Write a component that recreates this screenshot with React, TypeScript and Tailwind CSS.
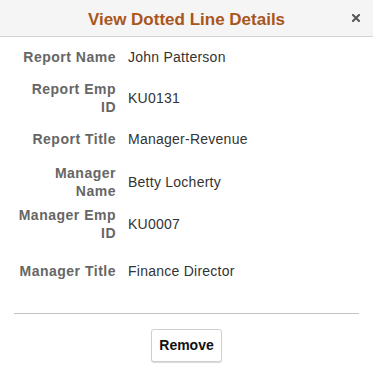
const rows = [
  { label: ['Report Name'], value: 'John Patterson', mt: 'mt-0' },
  { label: ['Report Emp', 'ID'], value: 'KU0131', mt: 'mt-[14px]' },
  { label: ['Report Title'], value: 'Manager-Revenue', mt: 'mt-[14px]' },
  { label: ['Manager', 'Name'], value: 'Betty Locherty', mt: 'mt-[16px]' },
  { label: ['Manager Emp', 'ID'], value: 'KU0007', mt: 'mt-[6px]' },
  { label: ['Manager Title'], value: 'Finance Director', mt: 'mt-[20px]' },
];

export default function App() {
  return (
    <div className="w-[373px] h-[387px] bg-white font-['Liberation_Sans',Arial,sans-serif] flex flex-col">
      {/* Header */}
      <div className="relative h-[37px] shrink-0 bg-[#f5f5f5] border-b border-[#d3d3d3] flex items-center justify-center">
        <h1 className="text-[17px] font-bold text-[#a9561c] leading-none pt-[2px]">View Dotted Line Details</h1>
        <button className="absolute right-[13px] top-[14px] w-[8px] h-[8px] flex items-center justify-center">
          <svg viewBox="0 0 8 8" className="w-[8px] h-[8px]" stroke="#555" strokeWidth="2" strokeLinecap="square">
            <path d="M1 1 L7 7 M7 1 L1 7" />
          </svg>
        </button>
      </div>

      {/* Details */}
      <div className="flex flex-col pt-[11px] pl-[14px] pr-4">
        {rows.map((r) => (
          <div key={r.value} className={`${r.mt} flex items-center gap-[12px] text-[14px] leading-[18px]`}>
            <div className="w-[102px] shrink-0 text-right font-bold text-[#666] whitespace-nowrap tracking-[0.5px]">
              {r.label.map((line) => (
                <div key={line}>{line}</div>
              ))}
            </div>
            <div className="text-[#333] tracking-[0.25px]">{r.value}</div>
          </div>
        ))}
      </div>

      {/* Footer */}
      <div className="mt-auto">
        <div className="mx-[14px] border-t border-[#c4c4c4]" />
        <div className="flex justify-center pt-[15px] pb-[25px]">
          <button className="h-[33px] px-[7px] bg-white border border-[#cfcfcf] rounded-[3px] shadow-[0_1px_1px_rgba(0,0,0,0.15)] text-[14px] font-bold text-[#111]">
            Remove
          </button>
        </div>
      </div>
    </div>
  );
}
